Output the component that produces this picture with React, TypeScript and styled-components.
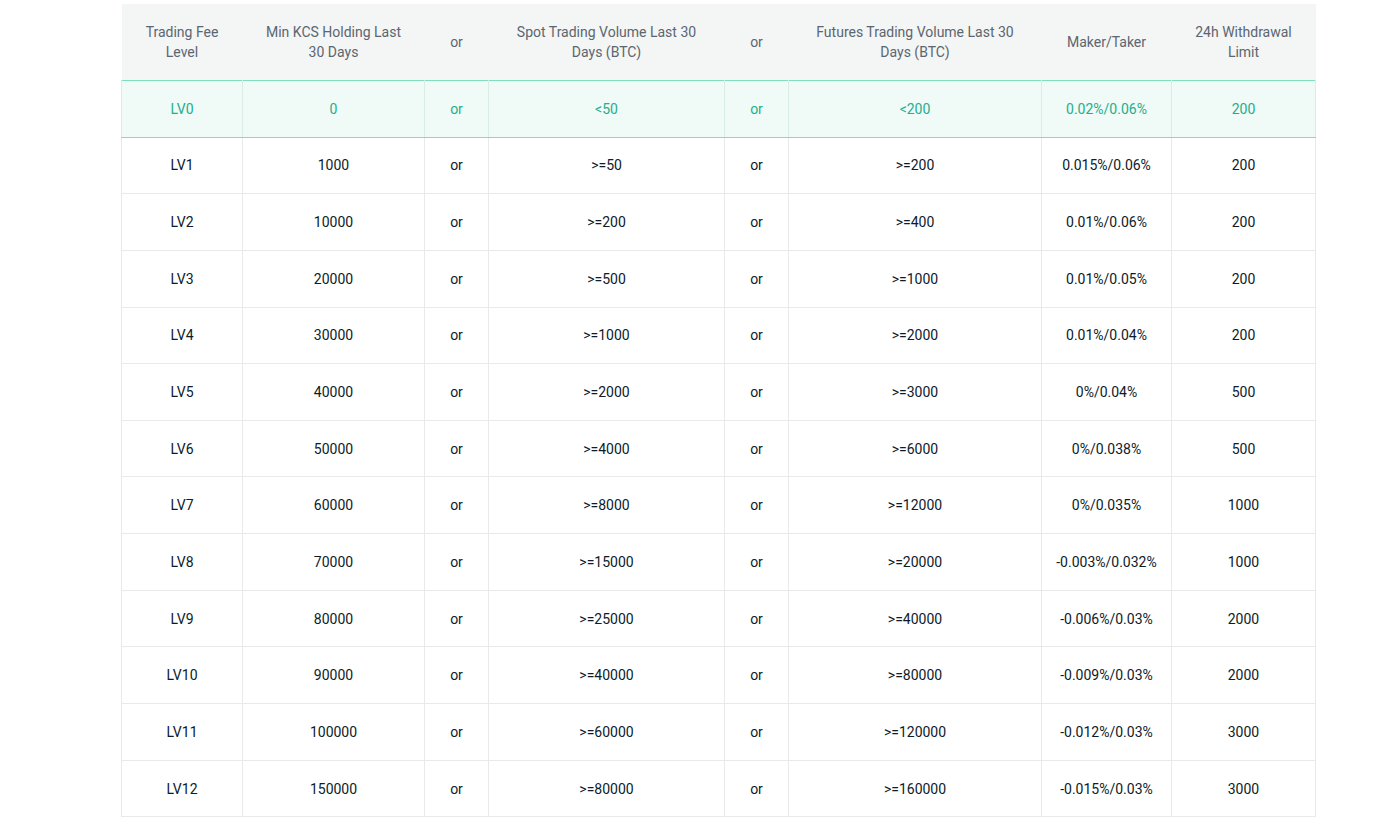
import styled, { createGlobalStyle } from 'styled-components';

const Global = createGlobalStyle`
  body { margin: 0; background: #fff; font-family: Roboto, "Noto Sans", sans-serif; }
`;

const Page = styled.div`
  padding: 4px 0 0 121px;
`;

const Table = styled.table`
  border-collapse: collapse;
  table-layout: fixed;
  width: 1194px;
  font-size: 14px;
`;

const HeadCell = styled.th`
  background: #f4f5f5;
  color: #5b6670;
  font-weight: 400;
  height: 76px;
  padding: 0 14px;
  line-height: 20px;
  text-align: center;
`;

const Row = styled.tr<{ $active?: boolean }>`
  height: 56.65px;
  background: ${(p) => (p.$active ? '#f0faf6' : '#fff')};
  color: ${(p) => (p.$active ? '#24ae8f' : '#0d1b2a')};
  & > td {
    border: 1px solid ${(p) => (p.$active ? '#d6eee5' : '#e8e9ea')};
    ${(p) => (p.$active ? 'border-top-color: #7ee0bb; border-bottom-color: #7ee0bb;' : '')}
  }
`;

const Cell = styled.td`
  text-align: center;
  padding: 0;
`;

const widths = [121, 182, 64, 236, 64, 253, 130, 144];
const heads = [
  'Trading Fee Level',
  'Min KCS Holding Last 30 Days',
  'or',
  'Spot Trading Volume Last 30 Days (BTC)',
  'or',
  'Futures Trading Volume Last 30 Days (BTC)',
  'Maker/Taker',
  '24h Withdrawal Limit',
];

const rows = [
  ['LV0', '0', '<50', '<200', '0.02%/0.06%', '200'],
  ['LV1', '1000', '>=50', '>=200', '0.015%/0.06%', '200'],
  ['LV2', '10000', '>=200', '>=400', '0.01%/0.06%', '200'],
  ['LV3', '20000', '>=500', '>=1000', '0.01%/0.05%', '200'],
  ['LV4', '30000', '>=1000', '>=2000', '0.01%/0.04%', '200'],
  ['LV5', '40000', '>=2000', '>=3000', '0%/0.04%', '500'],
  ['LV6', '50000', '>=4000', '>=6000', '0%/0.038%', '500'],
  ['LV7', '60000', '>=8000', '>=12000', '0%/0.035%', '1000'],
  ['LV8', '70000', '>=15000', '>=20000', '-0.003%/0.032%', '1000'],
  ['LV9', '80000', '>=25000', '>=40000', '-0.006%/0.03%', '2000'],
  ['LV10', '90000', '>=40000', '>=80000', '-0.009%/0.03%', '2000'],
  ['LV11', '100000', '>=60000', '>=120000', '-0.012%/0.03%', '3000'],
  ['LV12', '150000', '>=80000', '>=160000', '-0.015%/0.03%', '3000'],
];

export default function App() {
  return (
    <Page>
      <Global />
      <Table>
        <colgroup>
          {widths.map((w, i) => (
            <col key={i} style={{ width: w }} />
          ))}
        </colgroup>
        <thead>
          <tr>
            {heads.map((h, i) => (
              <HeadCell key={i}>{h}</HeadCell>
            ))}
          </tr>
        </thead>
        <tbody>
          {rows.map((r, i) => (
            <Row key={r[0]} $active={i === 0}>
              <Cell>{r[0]}</Cell>
              <Cell>{r[1]}</Cell>
              <Cell>or</Cell>
              <Cell>{r[2]}</Cell>
              <Cell>or</Cell>
              <Cell>{r[3]}</Cell>
              <Cell>{r[4]}</Cell>
              <Cell>{r[5]}</Cell>
            </Row>
          ))}
        </tbody>
      </Table>
    </Page>
  );
}
